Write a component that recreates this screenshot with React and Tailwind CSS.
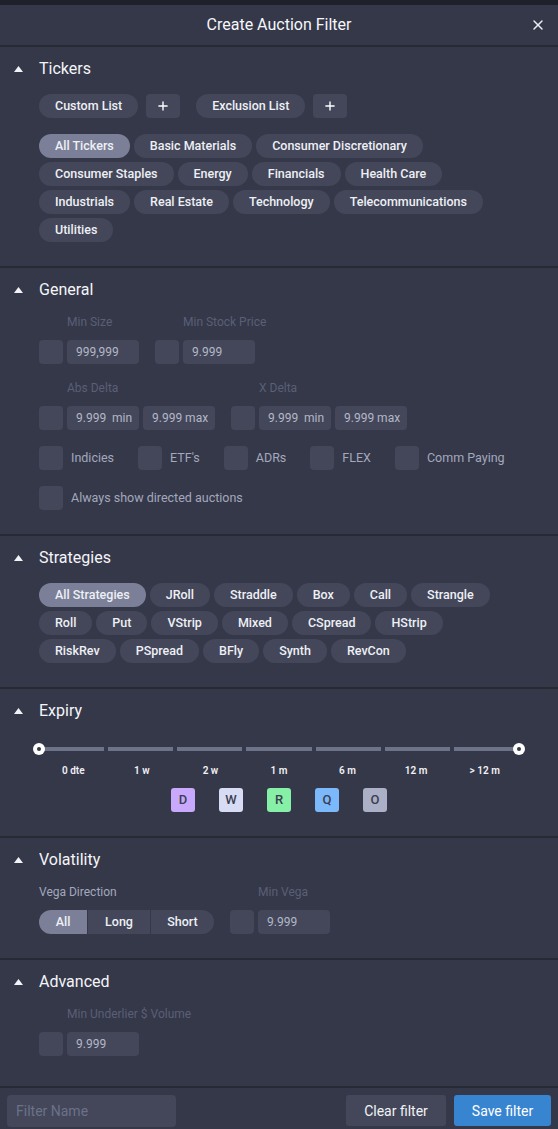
import { X, Plus } from 'lucide-react'

const TICKERS = [
  'All Tickers', 'Basic Materials', 'Consumer Discretionary', 'Consumer Staples', 'Energy',
  'Financials', 'Health Care', 'Industrials', 'Real Estate', 'Technology', 'Telecommunications', 'Utilities',
]

const STRATEGIES = [
  'All Strategies', 'JRoll', 'Straddle', 'Box', 'Call', 'Strangle', 'Roll', 'Put', 'VStrip',
  'Mixed', 'CSpread', 'HStrip', 'RiskRev', 'PSpread', 'BFly', 'Synth', 'RevCon',
]

const EXPIRY_LABELS = ['0 dte', '1 w', '2 w', '1 m', '6 m', '12 m', '> 12 m']

const BADGES = [
  { letter: 'D', color: 'bg-[#c9a9fb]' },
  { letter: 'W', color: 'bg-[#d7dcf4]' },
  { letter: 'R', color: 'bg-[#86f0a7]' },
  { letter: 'Q', color: 'bg-[#7cb9fb]' },
  { letter: 'O', color: 'bg-[#abb0c7]' },
]

function Triangle() {
  return (
    <svg width="9" height="6" viewBox="0 0 9 6" className="shrink-0">
      <path d="M4.5 0 L9 6 L0 6 Z" fill="#f2f3f7" />
    </svg>
  )
}

function Section({ title, children, last }) {
  return (
    <section className={`border-b-2 border-[#272935] pl-[14px] pr-4 pt-[10px] ${last ? 'pb-[30px]' : 'pb-6'}`}>
      <div className="flex items-center h-6 gap-[16px]">
        <Triangle />
        <h2 className="text-base text-[#f4f5f8] leading-6">{title}</h2>
      </div>
      <div className="pl-[25px]">{children}</div>
    </section>
  )
}

function Chip({ label, active }) {
  return (
    <span className={`h-6 px-4 rounded-full flex items-center text-[12.5px] font-medium text-[#eef0f5] whitespace-nowrap ${active ? 'bg-[#7b8098]' : 'bg-[#434759]'}`}>
      {label}
    </span>
  )
}

function Box() {
  return <span className="w-6 h-6 rounded-[4px] bg-[#434759] shrink-0" />
}

function Input({ value, w = 'w-[72px]' }) {
  return (
    <span className={`${w} h-6 rounded-[4px] bg-[#434759] pl-[9px] flex items-center text-xs text-[#b3b7c8] whitespace-pre`}>
      {value}
    </span>
  )
}

function Field({ label, values }) {
  return (
    <div className="flex flex-col">
      <span className="pl-[28px] text-xs leading-4 text-[#5a5f76]">{label}</span>
      <div className="flex gap-1 mt-[10px]">
        <Box />
        {values.map((v, i) => <Input key={i} value={v} />)}
      </div>
    </div>
  )
}

function Check({ label }) {
  return (
    <div className="flex items-center gap-2">
      <Box />
      <span className="text-[12.5px] text-[#a3a8bd]">{label}</span>
    </div>
  )
}

export default function App() {
  return (
    <div className="w-[558px] min-h-[1129px] bg-[#353849] flex flex-col" style={{ fontFamily: 'Roboto, "Noto Sans", sans-serif' }}>
      <div className="h-[5px] bg-[#1f212a]" />

      {/* Header */}
      <div className="relative h-[42px] border-b-2 border-[#272935] flex items-center justify-center">
        <h1 className="text-base text-[#f6f7fa]">Create Auction Filter</h1>
        <button className="absolute right-[12px] top-[12px] text-[#eceef3]">
          <X className="w-[16px] h-[16px]" strokeWidth={2.2} />
        </button>
      </div>

      {/* Tickers */}
      <Section title="Tickers">
        <div className="flex gap-4 mt-[13px]">
          <div className="flex gap-2">
            <Chip label="Custom List" />
            <span className="w-[34px] h-6 rounded-[4px] bg-[#434759] flex items-center justify-center text-white">
              <Plus className="w-[14px] h-[14px]" strokeWidth={2.4} />
            </span>
          </div>
          <div className="flex gap-2">
            <Chip label="Exclusion List" />
            <span className="w-[34px] h-6 rounded-[4px] bg-[#434759] flex items-center justify-center text-white">
              <Plus className="w-[14px] h-[14px]" strokeWidth={2.4} />
            </span>
          </div>
        </div>
        <div className="flex flex-wrap gap-1 mt-4 pr-[40px]">
          {TICKERS.map((t, i) => <Chip key={t} label={t} active={i === 0} />)}
        </div>
      </Section>

      {/* General */}
      <Section title="General">
        <div className="flex gap-4 mt-3">
          <Field label="Min Size" values={['999,999']} />
          <Field label="Min Stock Price" values={['9.999']} />
        </div>
        <div className="flex gap-4 mt-4">
          <Field label="Abs Delta" values={['9.999  min', '9.999 max']} />
          <Field label="X Delta" values={['9.999  min', '9.999 max']} />
        </div>
        <div className="flex gap-6 mt-4">
          <Check label="Indicies" />
          <Check label="ETF's" />
          <Check label="ADRs" />
          <Check label="FLEX" />
          <Check label="Comm Paying" />
        </div>
        <div className="flex mt-4">
          <Check label="Always show directed auctions" />
        </div>
      </Section>

      {/* Strategies */}
      <Section title="Strategies">
        <div className="flex flex-wrap gap-1 mt-[13px] pr-[40px]">
          {STRATEGIES.map((s, i) => <Chip key={s} label={s} active={i === 0} />)}
        </div>
      </Section>

      {/* Expiry */}
      <Section title="Expiry">
        <div className="relative mt-5 w-[480px] h-3 flex items-center">
          <div className="flex w-full gap-[4px]">
            {EXPIRY_LABELS.map((l) => <span key={l} className="flex-1 h-[4px] bg-[#6f7389]" />)}
          </div>
          <span className="absolute -left-[6px] top-0 w-3 h-3 rounded-full bg-white flex items-center justify-center">
            <span className="w-[4px] h-[4px] rounded-full bg-[#353849]" />
          </span>
          <span className="absolute -right-[6px] top-0 w-3 h-3 rounded-full bg-white flex items-center justify-center">
            <span className="w-[4px] h-[4px] rounded-full bg-[#353849]" />
          </span>
        </div>
        <div className="grid grid-cols-7 w-[480px] mt-[10px]">
          {EXPIRY_LABELS.map((l) => (
            <span key={l} className="text-center text-[10px] leading-3 font-semibold text-[#f0f1f5]">{l}</span>
          ))}
        </div>
        <div className="flex justify-center gap-6 mt-[11px] w-[480px]">
          {BADGES.map((b) => (
            <span key={b.letter} className={`w-6 h-6 rounded-[3px] ${b.color} flex items-center justify-center text-[13px] font-medium text-[#3b3e51]`}>
              {b.letter}
            </span>
          ))}
        </div>
      </Section>

      {/* Volatility */}
      <Section title="Volatility">
        <div className="flex gap-4 mt-3">
          <div className="flex flex-col">
            <span className="text-xs leading-4 text-[#a3a8bd]">Vega Direction</span>
            <div className="flex mt-[10px] h-6 rounded-full overflow-hidden text-[12.5px] font-medium text-[#eef0f5]">
              <span className="w-[48px] bg-[#7b8098] flex items-center justify-center">All</span>
              <span className="w-[63px] bg-[#434759] border-l border-[#353849] flex items-center justify-center">Long</span>
              <span className="w-[64px] bg-[#434759] border-l border-[#353849] flex items-center justify-center">Short</span>
            </div>
          </div>
          <Field label="Min Vega" values={['9.999']} />
        </div>
      </Section>

      {/* Advanced */}
      <Section title="Advanced" last>
        <div className="flex mt-3">
          <Field label="Min Underlier $ Volume" values={['9.999']} />
        </div>
      </Section>

      {/* Footer */}
      <div className="flex items-start justify-between pl-[7px] pr-[7px] pt-[7px] h-[41px]">
        <span className="w-[169px] h-8 rounded-[4px] bg-[#434759] pl-[9px] flex items-center text-sm text-[#6c7189]">
          Filter Name
        </span>
        <div className="flex gap-2">
          <button className="w-[100px] h-[31px] rounded-[3px] bg-[#434759] text-sm text-[#f2f3f7]">Clear filter</button>
          <button className="w-[97px] h-[31px] rounded-[3px] bg-[#3784d1] text-sm text-white">Save filter</button>
        </div>
      </div>
    </div>
  )
}
